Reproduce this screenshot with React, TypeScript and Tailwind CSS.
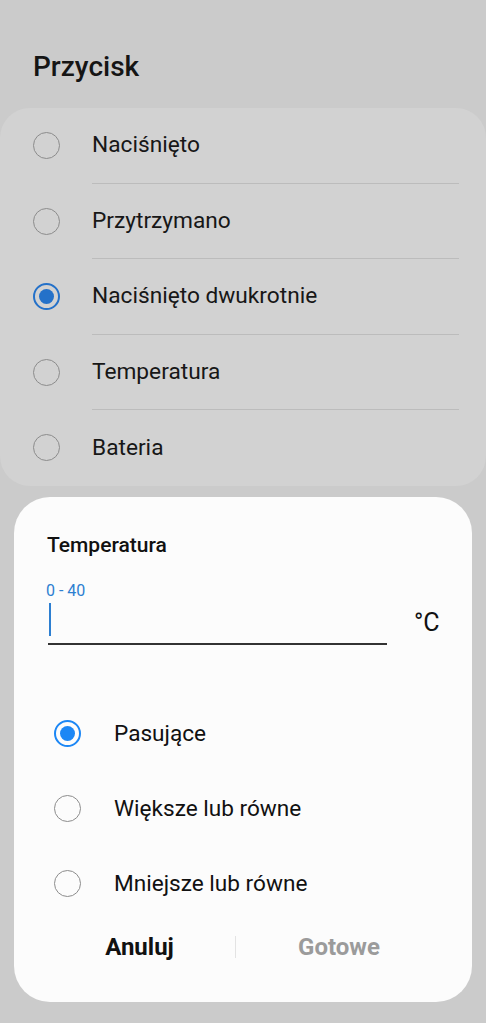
const opcje = [
  "Naciśnięto",
  "Przytrzymano",
  "Naciśnięto dwukrotnie",
  "Temperatura",
  "Bateria",
];

const warunki = ["Pasujące", "Większe lub równe", "Mniejsze lub równe"];

function Radio({ on, tone }: { on: boolean; tone: "dim" | "bright" }) {
  if (on) {
    const ring = tone === "dim" ? "border-[#2471c9]" : "border-[#1c87f5]";
    const dot = tone === "dim" ? "bg-[#2471c9]" : "bg-[#1c87f5]";
    return (
      <div className={`w-[27px] h-[27px] rounded-full border-2 ${ring} flex items-center justify-center shrink-0`}>
        <div className={`w-[15px] h-[15px] rounded-full ${dot}`}></div>
      </div>
    );
  }
  return (
    <div className="w-[27px] h-[27px] rounded-full border-[1.5px] border-[#8c8c8c] shrink-0"></div>
  );
}

export default function App() {
  return (
    <div
      className="w-[486px] h-[1023px] bg-[#cbcbcb] flex flex-col overflow-hidden"
      style={{ fontFamily: "Roboto, 'Noto Sans', sans-serif" }}
    >
      <h1 className="pl-[33px] pt-[51px] text-[28px] leading-[32px] font-medium text-[#151515]">
        Przycisk
      </h1>

      <div className="mt-[25px] bg-[#d2d2d2] rounded-[30px] flex flex-col">
        {opcje.map((o, i) => (
          <div key={o} className="h-[75.5px] flex items-center">
            <div className="w-[92px] pl-[33px] flex items-center">
              <Radio on={i === 2} tone="dim" />
            </div>
            <div
              className={`flex-1 mr-[27px] h-full flex items-center text-[22.7px] text-[#171717] ${
                i < opcje.length - 1 ? "border-b border-[#bcbcbc]" : ""
              }`}
            >
              {o}
            </div>
          </div>
        ))}
      </div>

      <div className="mt-[11px] mx-[14px] h-[505px] bg-[#fcfcfc] rounded-[36px] flex flex-col">
        <h2 className="pl-[33px] pt-[35px] text-[21px] leading-[26px] font-medium text-[#111]">
          Temperatura
        </h2>

        <div className="pl-[32px] mt-[23px] text-[16px] leading-[20px] text-[#2d7fd1]">0 - 40</div>

        <div className="pl-[34px] flex items-end">
          <div className="w-[339px] h-[44px] border-b-2 border-[#333] pt-[2px]">
            <div className="w-[2px] h-[33px] bg-[#2d7fd1] ml-[1px]"></div>
          </div>
          <div className="ml-[27px] mb-[7px] text-[25px] leading-[30px] text-[#111]">°C</div>
        </div>

        <div className="mt-[51.5px] flex flex-col">
          {warunki.map((w, i) => (
            <div key={w} className="h-[75px] flex items-center pl-[40px]">
              <Radio on={i === 0} tone="bright" />
              <span className="ml-[33px] text-[22.6px] text-[#111]">{w}</span>
            </div>
          ))}
        </div>

        <div className="h-[51px] flex items-center pl-[30px]">
          <button className="w-[191px] text-center text-[24px] font-bold text-[#111]">Anuluj</button>
          <div className="w-px h-[22px] bg-[#e3e3e3]"></div>
          <button className="w-[206px] text-center text-[24px] font-bold text-[#9b9b9b]">Gotowe</button>
        </div>
      </div>
    </div>
  );
}
